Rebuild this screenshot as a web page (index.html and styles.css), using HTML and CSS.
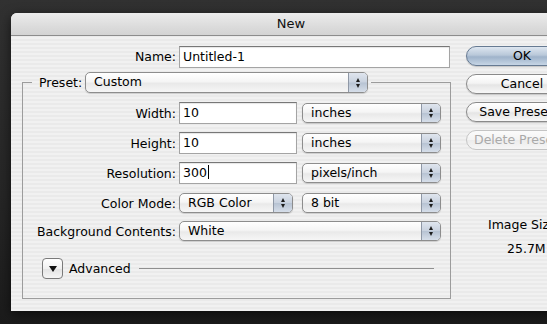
FILE: index.html
```html
<!DOCTYPE html>
<html>
<head>
<meta charset="utf-8">
<link rel="stylesheet" href="styles.css">
</head>
<body>
<div class="dialog">
  <div class="titlebar">New</div>
  <div class="content">
    <div class="left">
      <div class="name-row">
        <span class="name-label">Name:</span>
        <div class="input name-input">Untitled-1</div>
      </div>

      <div class="group">
        <div class="group-head">
          <span class="edge edge-left"></span>
          <span class="preset-label">Preset:</span>
          <div class="popup preset-popup"><span class="ptext">Custom</span><span class="arrows"><i class="up"></i><i class="down"></i></span></div>
          <span class="edge edge-right"></span>
        </div>
        <div class="group-body">
          <div class="row">
            <span class="label">Width:</span>
            <div class="input num">10</div>
            <div class="popup unit"><span class="ptext">inches</span><span class="arrows"><i class="up"></i><i class="down"></i></span></div>
          </div>
          <div class="row">
            <span class="label">Height:</span>
            <div class="input num">10</div>
            <div class="popup unit"><span class="ptext">inches</span><span class="arrows"><i class="up"></i><i class="down"></i></span></div>
          </div>
          <div class="row">
            <span class="label">Resolution:</span>
            <div class="input num">300<span class="caret"></span></div>
            <div class="popup unit"><span class="ptext">pixels/inch</span><span class="arrows"><i class="up"></i><i class="down"></i></span></div>
          </div>
          <div class="row row-color">
            <span class="label">Color Mode:</span>
            <div class="popup mode"><span class="ptext">RGB Color</span><span class="arrows"><i class="up"></i><i class="down"></i></span></div>
            <div class="popup unit"><span class="ptext">8 bit</span><span class="arrows"><i class="up"></i><i class="down"></i></span></div>
          </div>
          <div class="row row-bg">
            <span class="label">Background Contents:</span>
            <div class="popup bg"><span class="ptext">White</span><span class="arrows"><i class="up"></i><i class="down"></i></span></div>
          </div>
          <div class="adv-row">
            <span class="disclosure"><i></i></span>
            <span class="adv-text">Advanced</span>
            <span class="adv-line"></span>
          </div>
        </div>
      </div>
    </div>

    <div class="right">
      <div class="btn btn-default">OK</div>
      <div class="btn">Cancel</div>
      <div class="btn">Save Preset...</div>
      <div class="btn btn-disabled">Delete Preset...</div>
      <div class="size-title">Image Size:</div>
      <div class="size-value">25.7M</div>
    </div>
  </div>
</div>
</body>
</html>
```

FILE: styles.css
```css
html, body {
  margin: 0;
  padding: 0;
}
body {
  width: 547px;
  height: 324px;
  overflow: hidden;
  background: linear-gradient(#313131, #262626 60%, #1b1b1b);
  font-family: "DejaVu Sans", "Liberation Sans", sans-serif;
  font-size: 12.5px;
  color: #000;
}
.dialog {
  margin: 13px 0 0 11px;
  width: 560px;
  height: 298px;
  border-radius: 6px 6px 0 0;
  background: repeating-linear-gradient(#f1f1f1 0 2px, #eaeaea 2px 4px);
  box-shadow: 0 3px 12px rgba(0,0,0,0.6);
  overflow: hidden;
}
.titlebar {
  height: 22px;
  line-height: 22px;
  text-align: center;
  font-size: 13px;
  color: #111;
  background: linear-gradient(#ececec, #dcdcdc 60%, #d3d3d3);
  border-bottom: 1px solid #8c8c8c;
}
.content {
  display: flex;
}
.left {
  width: 440px;
  flex: none;
}
.name-row {
  display: flex;
  align-items: center;
  margin-top: 9px;
  height: 23px;
}
.name-label {
  width: 165px;
  text-align: right;
  margin-right: 3px;
}
.input {
  box-sizing: border-box;
  height: 22px;
  line-height: 20px;
  background: #fff;
  border: 1px solid #a4a4a4;
  border-top-color: #777;
  box-shadow: inset 0 1px 1px rgba(0,0,0,0.1);
  padding-left: 3px;
  white-space: nowrap;
}
.name-input {
  width: 271px;
}
.group {
  margin: 4px 0 0 11px;
  width: 429px;
}
.group-head {
  display: flex;
  align-items: center;
  height: 21px;
}
.edge {
  align-self: stretch;
  margin-top: 10px;
  border-top: 1px solid #9c9c9c;
}
.edge-left {
  width: 9px;
  border-left: 1px solid #9c9c9c;
  margin-right: 7px;
}
.edge-right {
  flex: 1;
  border-right: 1px solid #9c9c9c;
  margin-left: 3px;
}
.preset-label {
  width: 42px;
  white-space: nowrap;
  margin-right: 4px;
}
.popup {
  box-sizing: border-box;
  height: 20px;
  display: flex;
  align-items: stretch;
  border: 1px solid #8d8d8d;
  border-radius: 5px;
  background: linear-gradient(#ffffff, #f5f5f5 45%, #e9e9e9 55%, #f6f6f6);
  box-shadow: 0 1px 1px rgba(0,0,0,0.15);
  overflow: hidden;
  white-space: nowrap;
}
.ptext {
  flex: 1;
  padding-left: 8px;
  line-height: 18px;
}
.arrows {
  width: 18px;
  flex: none;
  border-left: 1px solid #8f98a6;
  background: linear-gradient(#dfe5ee, #c9d2df 48%, #b7c3d3 52%, #d6dee9);
  display: flex;
  flex-direction: column;
  align-items: center;
  justify-content: center;
  gap: 2px;
}
.arrows i {
  display: block;
  width: 0;
  height: 0;
  border-left: 2.5px solid transparent;
  border-right: 2.5px solid transparent;
}
.arrows .up {
  border-bottom: 4px solid #1d1d1d;
}
.arrows .down {
  border-top: 4px solid #1d1d1d;
}
.preset-popup {
  width: 283px;
  height: 21px;
}
.group-body {
  border: 1px solid #9c9c9c;
  border-top: none;
  padding: 9px 0 19px 0;
}
.row {
  display: flex;
  align-items: center;
  height: 22px;
  margin-bottom: 8px;
}
.row-color {
  margin-bottom: 6px;
}
.row-bg {
  margin-bottom: 16px;
}
.label {
  width: 153px;
  text-align: right;
  margin-right: 3px;
  white-space: nowrap;
}
.num {
  width: 118px;
  margin-right: 5px;
}
.unit {
  width: 139px;
}
.mode {
  width: 114px;
  margin-right: 9px;
}
.bg {
  width: 262px;
}
.caret {
  display: inline-block;
  width: 1px;
  height: 14px;
  background: #000;
  vertical-align: -2px;
  margin-left: 1px;
}
.adv-row {
  display: flex;
  align-items: center;
  height: 21px;
  padding-left: 19px;
}
.disclosure {
  box-sizing: border-box;
  width: 21px;
  height: 21px;
  border: 1px solid #7a7a7a;
  border-radius: 4px;
  background: linear-gradient(#ffffff, #f0f0f0 50%, #e3e3e3 52%, #f5f5f5);
  display: flex;
  align-items: center;
  justify-content: center;
}
.disclosure i {
  display: block;
  width: 0;
  height: 0;
  border-left: 4px solid transparent;
  border-right: 4px solid transparent;
  border-top: 6px solid #111;
  margin-top: 1px;
}
.adv-text {
  margin-left: 6px;
}
.adv-line {
  flex: none;
  width: 295px;
  margin-left: 8px;
  border-top: 1px solid #8f8f8f;
}
.right {
  margin-left: 15px;
  padding-top: 10px;
  width: 112px;
  flex: none;
}
.btn {
  box-sizing: border-box;
  height: 20px;
  line-height: 18px;
  width: 112px;
  margin-bottom: 8px;
  text-align: center;
  white-space: nowrap;
  border: 1px solid #8a8a8a;
  border-radius: 10px;
  background: linear-gradient(#ffffff, #f4f4f4 45%, #e5e5e5 55%, #f7f7f7);
  box-shadow: 0 1px 1px rgba(0,0,0,0.18);
}
.btn-default {
  border-color: #667a92;
  background: linear-gradient(#dde6f0, #b9c8d9 45%, #9fb3ca 55%, #c6d5e5);
}
.btn-disabled {
  color: #a9a9a9;
  border-color: #c4c4c4;
  box-shadow: none;
  background: linear-gradient(#fbfbfb, #f3f3f3 50%, #ececec 52%, #f6f6f6);
}
.size-title {
  margin-top: 67px;
  line-height: 16px;
  padding-left: 22px;
  white-space: nowrap;
}
.size-value {
  margin-top: 8px;
  line-height: 16px;
  padding-left: 41px;
  white-space: nowrap;
}
```
